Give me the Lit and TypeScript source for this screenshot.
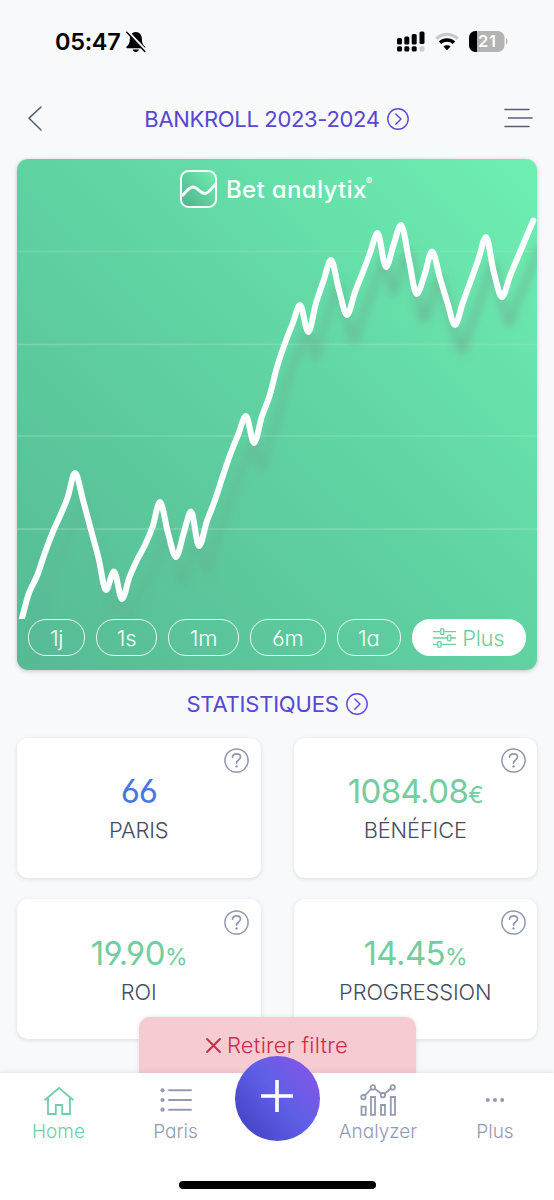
import { LitElement, html, svg, css } from "lit";
import { customElement, property } from "lit/decorators.js";

const POINTS: [number, number][] = [
  [21, 622], [29, 593], [37, 576], [44.5, 554], [52, 534], [60, 516], [67.5, 498], [75, 473],
  [83, 500], [91, 530], [98.5, 558], [106, 590], [114, 571.5], [122, 599], [129.5, 577], [137, 560],
  [145, 545], [152.5, 527], [160, 502], [168, 533], [176, 557], [184, 532], [191, 511.5], [199, 546],
  [207, 521], [215, 500], [222.5, 477], [230, 455], [238, 435], [246, 416], [254, 443], [262, 416],
  [269.5, 396], [277, 367], [285, 343], [292.5, 324], [300, 305], [308.3, 332], [316, 303], [323.5, 281],
  [331, 260], [339, 290], [347, 315], [355, 292], [362.5, 273], [370, 253], [377.5, 233], [386, 267],
  [393.5, 245], [401, 225], [409, 260], [416.7, 294], [424.5, 275], [432, 251.5], [440, 278], [447.5, 303],
  [455, 325], [463, 302], [471, 280], [478.5, 259], [486, 237], [494, 273], [502, 297], [510, 276],
  [517.5, 258], [525, 240], [533.3, 220.5],
];

/** Monotone cubic interpolation through the bankroll values. */
function monotonePath(p: [number, number][]): string {
  const n = p.length;
  const d = p.slice(1).map((q, i) => (q[1] - p[i][1]) / (q[0] - p[i][0]));
  const m = p.map((_, i) => {
    if (i === 0) return d[0];
    if (i === n - 1) return d[n - 2];
    return d[i - 1] * d[i] <= 0 ? 0 : (2 * d[i - 1] * d[i]) / (d[i - 1] + d[i]);
  });
  let out = `M${p[0][0]},${p[0][1]}`;
  for (let i = 0; i < n - 1; i++) {
    const h = (p[i + 1][0] - p[i][0]) / 3;
    out += `C${p[i][0] + h},${p[i][1] + m[i] * h} ${p[i + 1][0] - h},${p[i + 1][1] - m[i + 1] * h} ${p[i + 1][0]},${p[i + 1][1]}`;
  }
  return out;
}

const typography = css`
  :host {
    font-family: Inter, "Liberation Sans", sans-serif;
    font-weight: 300;
    font-feature-settings: "cv11", "cv03", "cv04";
    white-space: nowrap;
  }
  svg { display: block; flex: none; overflow: visible; }
`;

@customElement("status-bar")
class StatusBar extends LitElement {
  static styles = [typography, css`
    :host { display: flex; align-items: center; height: 83px; box-sizing: border-box; padding: 0 46px 0 55px; color: #000; }
    .time { font-size: 23.5px; font-weight: 600; line-height: 28px; letter-spacing: -0.3px; font-feature-settings: normal; }
    .bell { margin-left: 6px; }
    .grow { flex: 1; }
    .wifi { margin: 0 10px; }
    .num { font-weight: 600; }
  `];
  render() {
    return html`
      <span class="time">05:47</span>
      <svg class="bell" width="20" height="22" viewBox="0 0 20 22">
        <path d="M9.800 1C6 1 3.900 4 3.800 8c0 4-.8 5.700-3.200 7.600-.5.600-.3 1.600.6 1.600h17.300c.9 0 1.100-1 .5-1.600-2.300-1.900-3.100-3.600-3.100-7.600C15.800 4 13.600 1 9.800 1zM6.600 18.600h6.400c-.4 1.500-1.500 2.500-3.200 2.500s-2.800-1-3.200-2.500z"/>
        <path d="M1.700 0.800L20 20" stroke="#f7f8fa" stroke-width="3"/>
        <path d="M.8 1.300L18.800 20.500" stroke="#000" stroke-width="1.500" stroke-linecap="round"/>
      </svg>
      <span class="grow"></span>
      <svg width="28" height="21" viewBox="0 0 28 21">
        <rect x="0" y="7" width="5" height="6.500" rx="1.500"/><rect x="7.300" y="5.400" width="5" height="8" rx="1.500"/>
        <rect x="14.700" y="3" width="5" height="10.500" rx="1.500"/><rect x="22.500" y="0.600" width="5" height="12.500" rx="1.500"/>
        <rect x="0" y="15.300" width="5" height="5.200" rx="1.500"/><rect x="7.300" y="15.300" width="5" height="5.200" rx="1.500"/>
        <rect x="14.700" y="15.300" width="5" height="5.200" rx="1.500"/><rect x="22.500" y="15.300" width="5" height="5.200" rx="1.500" fill="#ccc"/>
      </svg>
      <svg class="wifi" width="24" height="19" viewBox="0 0 24 19">
        <path d="M1.300 6.700C7.200 .9 16.800 .9 22.700 6.700" stroke="#c9cacc" stroke-width="3.400" fill="none"/>
        <path d="M5 10.700c3.900-3.700 10.100-3.700 14 0" stroke="#000" stroke-width="3.500" fill="none"/>
        <path d="M12 18.300l-3.600-3.700c2-1.900 5.200-1.900 7.200 0z"/>
      </svg>
      <svg width="39" height="21" viewBox="0 0 39 21">
        <clipPath id="cell"><rect width="35.500" height="21" rx="6.500"/></clipPath>
        <g clip-path="url(#cell)"><rect width="36" height="21" fill="#b3b3b3"/><rect width="8" height="21"/></g>
        <path d="M37 7.300c2 .9 2 5.500 0 6.400z" fill="#b3b3b3"/>
        <text class="num" x="9" y="16.300" font-size="16.500" fill="#fff" textLength="18">21</text>
      </svg>`;
  }
}

@customElement("section-title")
class SectionTitle extends LitElement {
  static styles = [typography, css`
    :host { display: flex; align-items: center; justify-content: center; gap: 7px; color: #5747d1; font-weight: 400; font-size: 22px; line-height: 28px; letter-spacing: -0.33px; }
  `];
  render() {
    return html`<slot></slot>
      <svg width="22" height="22" viewBox="0 0 22 22" fill="none" stroke="#5a49dc" stroke-width="1.400" stroke-linecap="round" stroke-linejoin="round">
        <circle cx="11" cy="11" r="10.200"/><path d="M8.800 5.900L14 11l-5.200 5.200"/>
      </svg>`;
  }
}

@customElement("bankroll-chart")
class BankrollChart extends LitElement {
  static styles = [typography, css`
    :host {
      display: flex; flex-direction: column; justify-content: space-between; position: relative; box-sizing: border-box;
      height: 511px; border-radius: 11px; overflow: hidden; padding: 11px 11px 14px 11px; color: #fff;
      background: linear-gradient(45deg, #56ba94 0%, #60d2a2 50%, #6eefb2 100%);
    }
    .plot { position: absolute; inset: 0; }
    .brand { display: flex; align-items: center; position: relative; margin-left: 152px; height: 38px; }
    .name { font-size: 24px; font-weight: 500; line-height: 30px; margin-left: 9px; letter-spacing: 0.35px; padding-top: 1px; }
    .reg { font-size: 10px; line-height: 10px; align-self: flex-start; margin-top: 6px; margin-left: -1px; font-weight: 400; }
    .ranges { display: flex; gap: 11px; position: relative; }
    .pill {
      box-sizing: border-box; height: 37px; border-radius: 18px; border: 1.500px solid rgba(255,255,255,.88);
      display: flex; align-items: center; justify-content: center; font-size: 22px; line-height: 26px; letter-spacing: -0.3px;
    }
    .w0 { width: 57px } .w1 { width: 61px } .w2 { width: 71px } .w3 { width: 75.500px } .w4 { width: 64.500px }
    .more { width: 113.500px; background: #fff; color: #6fcd9f; gap: 6px; }
  `];
  render() {
    const line = monotonePath(POINTS);
    return html`
      <svg class="plot" width="520" height="511" viewBox="17 159 520 511">
        <defs>
          <clipPath id="area"><rect x="17" y="159" width="520" height="460"/></clipPath>
          <filter id="blur" filterUnits="userSpaceOnUse" x="0" y="130" width="560" height="540"><feGaussianBlur stdDeviation="4.800"/></filter>
          <linearGradient id="shade" gradientUnits="userSpaceOnUse" x1="20" y1="0" x2="530" y2="0">
            <stop offset="0" stop-color="#6d9a85" stop-opacity=".15"/>
            <stop offset=".45" stop-color="#6d9582" stop-opacity=".32"/>
            <stop offset=".8" stop-color="#6d9382" stop-opacity=".48"/>
          </linearGradient>
        </defs>
        ${[251.5, 344.5, 436, 529].map((y, i) => svg`<path d="M17 ${y}H537" stroke="#9fe6c4" stroke-opacity=${[0.35, 0.4, 0.4, 0.45][i]} stroke-width="1.500"/>`)}
        <g clip-path="url(#area)" fill="none" stroke-width="6" stroke-linecap="round" stroke-linejoin="round">
          <g transform="translate(7 26)"><path d=${line} stroke="url(#shade)" filter="url(#blur)"/></g>
          <path d=${line} stroke="#fff"/>
        </g>
      </svg>
      <div class="brand">
        <svg width="37" height="38" viewBox="0 0 37 38" fill="none" stroke="#fff">
          <defs><linearGradient id="lg" x1="0" y1="1" x2="1" y2="0"><stop offset="0" stop-color="#4fb08b"/><stop offset="1" stop-color="#6ff0b4"/></linearGradient></defs>
          <rect x="1" y="1" width="35" height="36" rx="7.500" fill="url(#lg)" stroke-width="2" stroke-opacity=".92"/>
          <path d="M2 26C6 22 9 17 13 17c5 0 7 7 12 6.500 4-.5 6-5 11-9.500" stroke-width="2.900"/>
        </svg>
        <span class="name">Bet analytix</span><span class="reg">®</span>
      </div>
      <div class="ranges">
        ${["1j", "1s", "1m", "6m", "1a"].map((t, i) => html`<div class="pill w${i}">${t}</div>`)}
        <div class="pill more">
          <svg width="23" height="20" viewBox="0 0 23 20" fill="none" stroke="#6fcd9f" stroke-width="1.300">
            <path d="M0 3.600h7.500m3.500 0h12M0 10h14.500m3.500 0h5M0 16.400h4.700m3.500 0h14.800"/>
            <rect x="7.600" y=".8" width="3.200" height="5.600" rx=".8"/><rect x="14.700" y="7.200" width="3.200" height="5.600" rx=".8"/><rect x="4.800" y="13.600" width="3.200" height="5.600" rx=".8"/>
          </svg>
          <span>Plus</span>
        </div>
      </div>`;
  }
}

@customElement("stat-card")
class StatCard extends LitElement {
  @property() value = "";
  @property() unit = "";
  @property() tone = "green";
  static styles = [typography, css`
    :host {
      display: flex; flex-direction: column; align-items: center; box-sizing: border-box; height: 140px; padding-top: 33.500px;
      background: #fff; border-radius: 11px; box-shadow: 0 1px 4px rgba(60,70,90,.16); position: relative;
    }
    .value { display: flex; align-items: baseline; height: 40px; font-size: 33px; line-height: 40px; font-weight: 400; color: #74cda0; letter-spacing: -0.6px; }
    .blue { color: #4876e6; letter-spacing: -1.200px; }
    .unit { font-size: 23px; letter-spacing: -0.7px; }
    .label { font-size: 21.800px; line-height: 28px; color: #454c60; margin-top: 5px; letter-spacing: -0.1px; }
    .blue + .label { margin-top: 4.500px; }
    .help { position: absolute; right: 11.500px; top: 10.500px; }
  `];
  render() {
    return html`
      <svg class="help" width="25" height="25" viewBox="0 0 25 25" fill="none" stroke="#8f98ae">
        <circle cx="12.500" cy="12.500" r="11.600" stroke-width="1.500"/>
        <path d="M8.500 9.200c.2-2.300 1.900-3.300 4-3.300 2.300 0 4 1.200 4 3.200 0 3-3.900 2.800-4 6" stroke-width="1.700" stroke-linecap="round"/>
        <circle cx="12.500" cy="18.400" r="1.200" fill="#8f98ae" stroke="none"/>
      </svg>
      <div class="value ${this.tone}">${this.value}${this.unit ? html`<span class="unit">${this.unit}</span>` : ""}</div>
      <div class="label"><slot></slot></div>`;
  }
}

@customElement("tab-bar")
class TabBar extends LitElement {
  static styles = [typography, css`
    :host { display: block; position: relative; height: 127px; background: #fff; box-shadow: 0 0 5px rgba(60,70,90,.16); }
    .tabs { display: grid; grid-template-columns: 117px 117px 86px 116px 118px; }
    .tab { display: flex; flex-direction: column; align-items: center; padding-top: 12px; color: #929bb0; font-size: 19px; line-height: 24px; gap: 5px; }
    .on { color: #74cda8; }
    .fab {
      position: absolute; left: 234.500px; top: -17px; width: 85px; height: 85px; border-radius: 50%;
      background: linear-gradient(50deg, #433fc4 5%, #5f5fe6 52%, #8655e8 95%);
      display: flex; align-items: center; justify-content: center;
    }
    .fab svg { margin-bottom: 5px; }
    .bar { position: absolute; left: 179px; top: 108px; width: 197px; height: 8px; border-radius: 4px; background: #000; }
  `];
  render() {
    return html`
      <div class="tabs">
        <div class="tab on">
          <svg width="32" height="30" viewBox="0 0 32 30" fill="none" stroke="#74cda8" stroke-width="1.800">
            <path d="M1.500 15.300L16 3l14.500 12.300M5 12.600v16.400h7.800V20h6.400v9H27V12.600"/>
          </svg><span>Home</span>
        </div>
        <div class="tab">
          <svg width="32" height="30" viewBox="0 0 32 30" stroke="#929bb0" stroke-width="2" stroke-linecap="round" fill="#929bb0">
            <path d="M9 5.300h22M9 15h22M9 24.700h22"/><g stroke="none"><circle cx="2.500" cy="5.300" r="2.100"/><circle cx="2.500" cy="15" r="2.100"/><circle cx="2.500" cy="24.700" r="2.100"/></g>
          </svg><span>Paris</span>
        </div>
        <span></span>
        <div class="tab">
          <svg width="36" height="30" viewBox="0 0 36 30" fill="none" stroke="#929bb0" stroke-width="1.800">
            <path d="M1.500 21.700h4.200v8.100H1.500zM11 12h4v17.800h-4zM21 20h4v9.800h-4zM30.800 12H35v17.800h-4.200zM4.800 10.600l6.300-6.600M14.600 3.600l6.800 5.200M24.600 8.800l6.600-5.600"/>
            <circle cx="3.400" cy="12.200" r="2.200"/><circle cx="12.900" cy="2.400" r="2.200"/><circle cx="22.900" cy="10.200" r="2.200"/><circle cx="32.700" cy="2.400" r="2.200"/>
          </svg><span>Analyzer</span>
        </div>
        <div class="tab">
          <svg width="20" height="30" viewBox="0 0 20 30" fill="#929bb0"><circle cx="2.800" cy="15" r="2"/><circle cx="10" cy="15" r="2"/><circle cx="17.200" cy="15" r="2"/></svg>
          <span>Plus</span>
        </div>
      </div>
      <div class="fab">
        <svg width="32" height="32" viewBox="0 0 32 32" stroke="#fff" stroke-width="3.600"><path d="M16 0v32M0 16h32"/></svg>
      </div>
      <div class="bar"></div>`;
  }
}

@customElement("app-root")
class AppRoot extends LitElement {
  static styles = [typography, css`
    :host { display: block; width: 554px; height: 1200px; position: relative; overflow: hidden; background: #f8f9fb; }
    .header { display: flex; align-items: center; justify-content: space-between; height: 70px; padding: 0 21px 0 27px; margin-bottom: 6px; box-sizing: border-box; }
    .main { margin-left: 6px; padding-top: 1px; }
    .card { margin: 0 17px; box-shadow: 0 1px 4px rgba(60,70,90,.3); }
    .stats-title { margin: 20px 0 19.500px; letter-spacing: -0.2px; }
    .stats { display: grid; grid-template-columns: 243.500px 243.500px; justify-content: space-between; row-gap: 21.700px; margin: 0 17px; }
    .dock { position: absolute; left: 0; right: 0; bottom: 0; }
    .toast {
      width: 277px; height: 56px; margin: 0 auto; box-sizing: border-box; background: #f6ccd2; border-radius: 11px 11px 0 0;
      display: flex; align-items: center; justify-content: center; gap: 6px; color: #c62f4e; font-size: 22px; line-height: 28px; letter-spacing: 0.25px;
      box-shadow: 0 0 4px rgba(60,70,90,.15);
    }
  `];
  render() {
    return html`
      <status-bar></status-bar>
      <div class="header">
        <svg width="16" height="26" viewBox="0 0 16 26" fill="none" stroke="#566074" stroke-width="1.600" stroke-linecap="round" stroke-linejoin="round"><path d="M14 2L2 13.200 14 25"/></svg>
        <section-title class="main">BANKROLL 2023-2024</section-title>
        <svg width="29" height="20" viewBox="0 0 29 20" stroke="#566074" stroke-width="1.600" stroke-linecap="round"><path d="M1 1.500h24M4.500 10H28M1 18.500h24"/></svg>
      </div>
      <bankroll-chart class="card"></bankroll-chart>
      <section-title class="stats-title">STATISTIQUES</section-title>
      <div class="stats">
        <stat-card value="66" tone="blue">PARIS</stat-card>
        <stat-card value="1084.08" unit="€">BÉNÉFICE</stat-card>
        <stat-card value="19.90" unit="%">ROI</stat-card>
        <stat-card value="14.45" unit="%">PROGRESSION</stat-card>
      </div>
      <div class="dock">
        <div class="toast">
          <svg width="15" height="15" viewBox="0 0 14 14" stroke="#c62f4e" stroke-width="1.900" stroke-linecap="round"><path d="M1 1l12 12M13 1L1 13"/></svg>
          <span>Retirer filtre</span>
        </div>
        <tab-bar></tab-bar>
      </div>`;
  }
}
